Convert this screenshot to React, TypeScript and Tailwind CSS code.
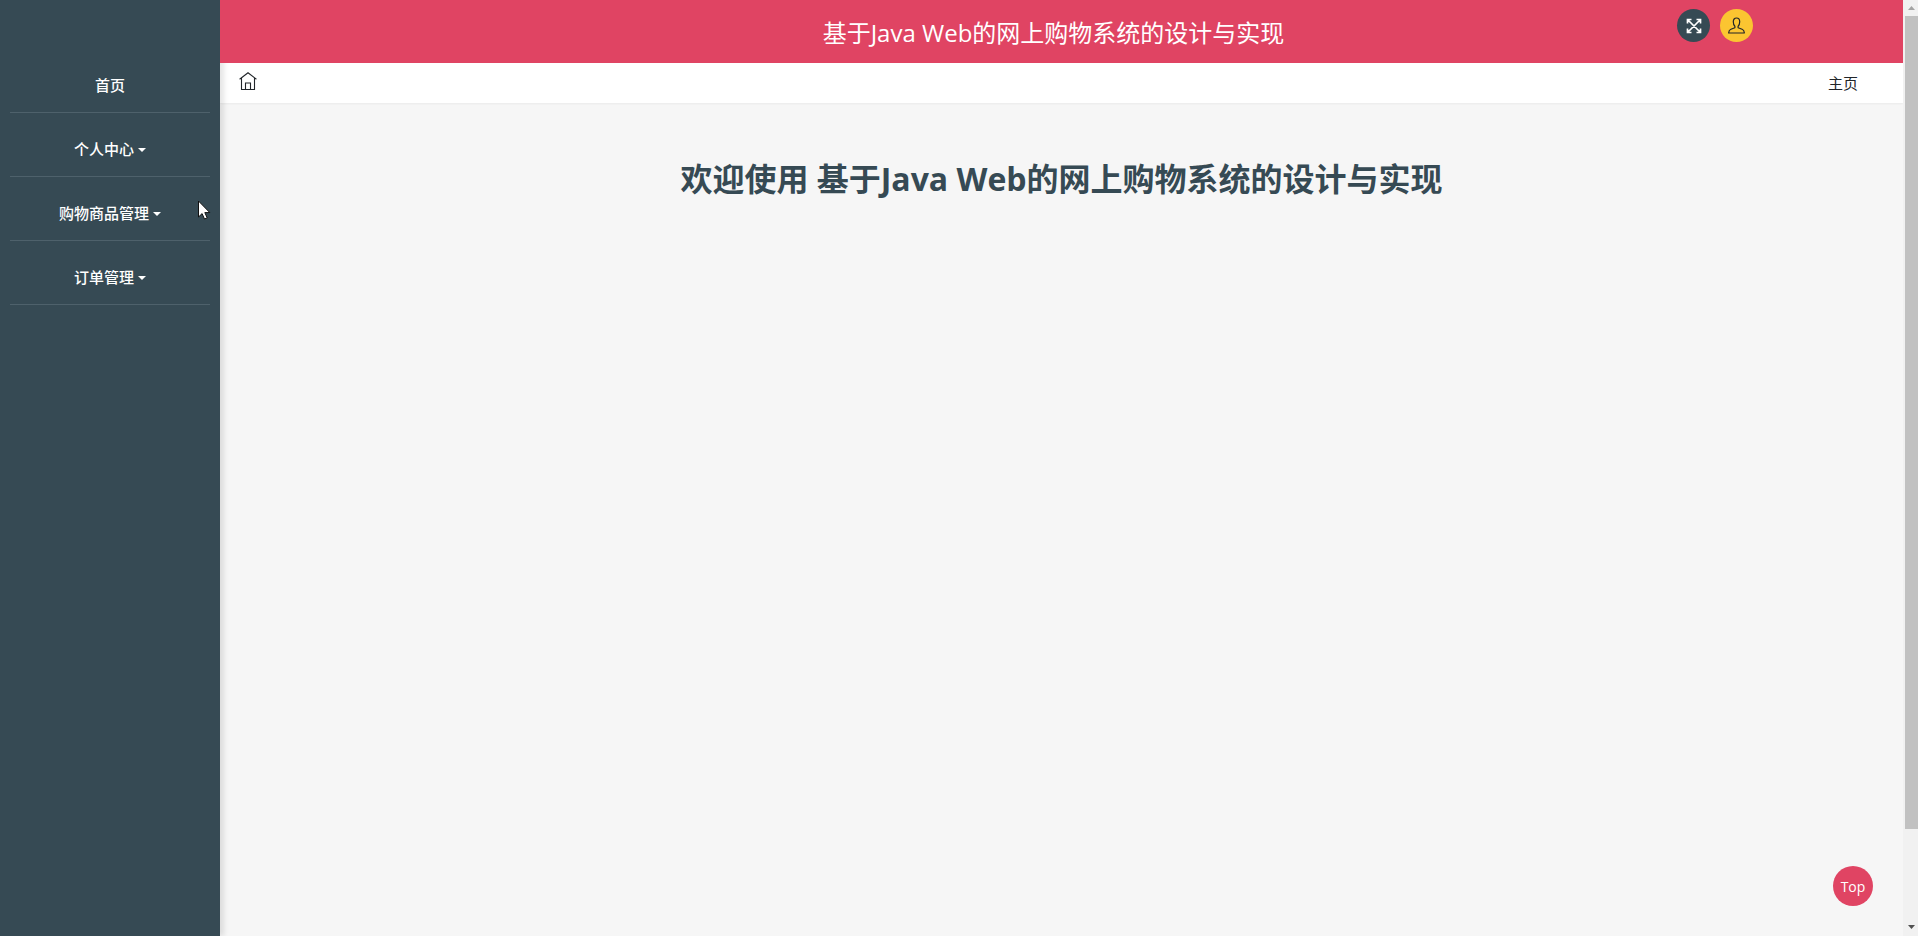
import { useState } from "react";

interface MenuItem {
  label: string;
  children?: string[];
}

const MENU: MenuItem[] = [
  { label: "首页" },
  { label: "个人中心", children: [] },
  { label: "购物商品管理", children: [] },
  { label: "订单管理", children: [] },
];

const SITE_NAME = "基于Java Web的网上购物系统的设计与实现";

export default function App() {
  const [open, setOpen] = useState<string | null>(null);

  return (
    <div className="flex h-screen overflow-hidden bg-[#f6f6f6] font-['Open_Sans','Noto_Sans_CJK_SC',sans-serif] text-[15px] text-[#212529]">
      <nav className="relative z-10 w-[220px] shrink-0 bg-[#364a54] px-[10px] pt-[49px] shadow-[4px_0_5px_rgba(0,0,0,0.1)]">
        <ul>
          {MENU.map((item) => (
            <li key={item.label} className="border-b border-[#4e616b]">
              {item.children ? (
                <button
                  type="button"
                  aria-expanded={open === item.label}
                  onClick={() => setOpen(open === item.label ? null : item.label)}
                  className="flex h-[63px] w-full items-center justify-center gap-1 pt-[10px] font-medium text-white"
                >
                  {item.label}
                  <Caret />
                </button>
              ) : (
                <a href="#" className="flex h-[63px] items-center justify-center pt-[10px] font-medium text-white">
                  {item.label}
                </a>
              )}
            </li>
          ))}
        </ul>
        <Pointer />
      </nav>

      <div className="flex min-w-0 flex-1 flex-col">
        <header className="relative z-20 flex h-[63px] shrink-0 items-center bg-[#e04463] pl-[210px]">
          <div className="min-w-0 flex-1 pt-[2px] text-center text-2xl text-white">{SITE_NAME}</div>
          <div className="flex w-[226px] shrink-0 gap-[10px] self-start pt-[9px]">
            <button type="button" aria-label="全屏" className="flex size-[33px] items-center justify-center rounded-full bg-[#364a54] text-white">
              <ExpandIcon />
            </button>
            <button type="button" aria-label="个人中心" className="flex size-[33px] items-center justify-center rounded-full bg-[#fbc531] text-[#212529]">
              <UserIcon />
            </button>
          </div>
        </header>

        <div className="flex h-10 shrink-0 items-center justify-between bg-white pr-[45px] pl-[19px] shadow-xs">
          <a href="#" aria-label="主页" className="pb-1">
            <HomeIcon />
          </a>
          <span>主页</span>
        </div>

        <main className="flex-1 pt-[52px]">
          <h1 className="text-center text-[32px] leading-12 font-bold text-[#364a54]">欢迎使用 {SITE_NAME}</h1>
        </main>
      </div>

      <Scrollbar />

      <a
        href="#"
        className="fixed right-[45px] bottom-[30px] z-20 flex size-10 items-center justify-center rounded-full bg-[#e04463] pt-[2px] text-sm text-white"
      >
        Top
      </a>
    </div>
  );
}

function Caret() {
  return (
    <svg width="8" height="4" viewBox="0 0 8 4" fill="currentColor" aria-hidden="true">
      <path d="M0 0h8L4 4z" />
    </svg>
  );
}

function ExpandIcon() {
  return (
    <svg width="16" height="16" viewBox="0 0 16 16" fill="none" stroke="currentColor" strokeWidth="1.700" aria-hidden="true">
      <path d="M1.500 1.500l13 13M14.500 1.500l-13 13M1.500 5.500v-4h4M10.500 1.500h4v4M14.500 10.500v4h-4M5.500 14.500h-4v-4" />
    </svg>
  );
}

function UserIcon() {
  return (
    <svg width="17" height="17" viewBox="0 0 17 17" fill="none" stroke="currentColor" strokeWidth="1.200" strokeLinejoin="round" aria-hidden="true">
      <path d="M6.900 10.700V9.300C5.800 8.300 5.300 6.700 5.300 4.700 5.300 2.400 6.500 1 8.500 1s3.200 1.400 3.200 3.700c0 2-.5 3.600-1.600 4.600v1.400l4 1.500c1.400.5 2.100 1.600 2.300 3.800H.6c.2-2.200.9-3.300 2.300-3.800z" />
    </svg>
  );
}

function HomeIcon() {
  return (
    <svg width="18" height="18" viewBox="0 0 18 18" fill="none" stroke="currentColor" strokeWidth="1.100" aria-hidden="true">
      <path d="M.6 7.200L9 .8l8.400 6.400M2.500 6v11.500h13V6M6.500 17.500v-6.500h5v6.500" />
    </svg>
  );
}

function Pointer() {
  return (
    <svg className="absolute top-[200px] left-[198px]" width="13" height="20" viewBox="0 0 13 20" aria-hidden="true">
      <path d="M.5 1v16l3.600-3.400 2.400 5.400 2.700-1.100-2.400-5.300h5z" fill="#fff" stroke="#111" strokeWidth="1" />
    </svg>
  );
}

function Scrollbar() {
  return (
    <div aria-hidden="true" className="flex w-[15px] shrink-0 flex-col items-end bg-[#f1f1f1]">
      <svg width="13" height="16" viewBox="0 0 13 16" fill="#a3a3a3">
        <path d="M3 10l3.500-4 3.500 4z" />
      </svg>
      <div className="w-[13px] grow-[813] bg-[#c1c1c1]" />
      <div className="grow-[91]" />
      <svg width="13" height="16" viewBox="0 0 13 16" fill="#505050">
        <path d="M3 5h7L6.500 9z" />
      </svg>
    </div>
  );
}
